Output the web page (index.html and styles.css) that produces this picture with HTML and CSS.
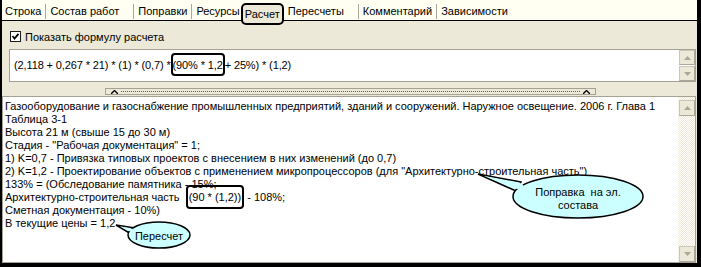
FILE: index.html
```html
<!DOCTYPE html>
<html lang="ru">
<head>
    <meta charset="UTF-8" />
    <title>Расчет</title>
    <link rel="stylesheet" href="styles.css">
</head>
<body>
<div class="window">

    <div class="tabs">
        <span class="tab first">Строка</span>
        <span class="tab wide">Состав работ</span>
        <span class="tab">Поправки</span>
        <span class="tab">Ресурсы</span>
        <span class="tab active">Расчет</span>
        <span class="tab after-active wide">Пересчеты</span>
        <span class="tab">Комментарий</span>
        <span class="tab">Зависимости</span>
    </div>

    <div class="page">
        <label class="opts">
            <svg class="check" width="11" height="11" viewBox="0 0 11 11">
                <rect x="0.5" y="0.5" width="10" height="10" fill="#fff" stroke="#1c1c1c"/>
                <path d="M2.5 5 L4.5 7.5 L8.5 2.8" fill="none" stroke="#000" stroke-width="1.8"/>
            </svg>
            Показать формулу расчета
        </label>

        <div class="formula">
            <div class="formula-text">(2,118 + 0,267 * 21) * (1) * (0,7) * <span class="mark">(90% * 1,2</span> + 25%) * (1,2)</div>
            <div class="scroll">
                <div class="sbtn"><svg width="7" height="4" viewBox="0 0 7 4"><path d="M0 4 L3.5 0 L7 4 Z" fill="#aca899"/></svg></div>
                <div class="sbtn"><svg width="7" height="4" viewBox="0 0 7 4"><path d="M0 0 L3.5 4 L7 0 Z" fill="#aca899"/></svg></div>
            </div>
        </div>

        <div class="split-row">
            <div class="splitter">
                <svg width="7" height="4" viewBox="0 0 7 4"><path d="M0 4 L3.5 0.5 L7 4" fill="none" stroke="#000" stroke-width="1.4"/></svg>
                <span class="dots"></span>
                <svg width="7" height="4" viewBox="0 0 7 4"><path d="M0 4 L3.5 0.5 L7 4" fill="none" stroke="#000" stroke-width="1.4"/></svg>
            </div>
        </div>

        <div class="memo">
            <div class="memo-text">
                <div>Газооборудование и газоснабжение промышленных предприятий, зданий и сооружений. Наружное освещение. 2006 г. Глава 1</div>
                <div>Таблица 3-1</div>
                <div>Высота 21 м (свыше 15 до 30 м)</div>
                <div>Стадия - "Рабочая документация" = 1;</div>
                <div>1) K=0,7 - Привязка типовых проектов с внесением в них изменений (до 0,7)</div>
                <div>2) K=1,2 - Проектирование объектов с применением микропроцессоров (для "Архитектурно-строительная часть")</div>
                <div>133% = (Обследование памятника - 15%;</div>
                <div>Архитектурно-строительная часть &nbsp;<span class="mark small">(90 * (1,2))</span> - 108%;</div>
                <div>Сметная документация - 10%)</div>
                <div>В текущие цены = 1,2</div>
            </div>
            <div class="scroll tall">
                <div class="sbtn"><svg width="7" height="4" viewBox="0 0 7 4"><path d="M0 4 L3.5 0 L7 4 Z" fill="#aca899"/></svg></div>
                <div class="track"></div>
                <div class="sbtn"><svg width="7" height="4" viewBox="0 0 7 4"><path d="M0 0 L3.5 4 L7 0 Z" fill="#aca899"/></svg></div>
            </div>
        </div>
    </div>

    <!-- callouts over the memo -->
    <svg class="callouts" width="701" height="267" viewBox="0 0 701 267">
        <g stroke="#000" stroke-width="1.5" fill="#ccffff">
            <path d="M521 182 L478 174 L516 191 Z"/>
            <ellipse cx="578" cy="196.5" rx="65" ry="21.5"/>
            <path d="M135 228 L116 225 L131 234 Z"/>
            <ellipse cx="159" cy="235" rx="31" ry="13"/>
        </g>
        <g fill="#ccffff">
            <path d="M522 183.5 L484 176 L517 189 L526 190 Z"/>
            <path d="M136 229.5 L120 226.5 L132 232.5 L138 232 Z"/>
        </g>
        <text class="bubble" x="578" y="196" text-anchor="middle">Поправка &nbsp;на эл.</text>
        <text class="bubble" x="578" y="209" text-anchor="middle">состава</text>
        <text class="bubble" x="159" y="240" text-anchor="middle">Пересчет</text>
    </svg>

</div>
</body>
</html>
```

FILE: styles.css
```css
* {
    box-sizing: border-box;
}

body {
    margin: 0;
    font-family: "Liberation Sans", Arial, sans-serif;
    font-size: 11px;
    color: #000;
}

.window {
    position: relative;
    width: 701px;
    height: 267px;
    border-left: 2px solid #000;
    border-right: 4px solid #000;
    border-bottom: 4px solid #000;
    background: #ece9d8;
    display: flex;
    flex-direction: column;
}

/* tab strip */
.tabs {
    height: 21px;
    flex: none;
    display: flex;
    align-items: center;
    padding-top: 2px;
    background: #fffff2;
    border-bottom: 1px solid #000;
}

.tab {
    height: 15px;
    line-height: 15px;
    padding: 0 4px;
    border-left: 1px solid #a8a8a0;
    white-space: nowrap;
}

.tab.first {
    border-left: none;
    padding-left: 3px;
}

.tab.wide {
    padding-right: 14px;
}

.tab.active {
    position: relative;
    z-index: 1;
    align-self: flex-start;
    margin-top: 1px;
    margin-left: -3px;
    height: 22px;
    line-height: 18px;
    padding: 0 2px;
    border: 2px solid #000;
    border-radius: 5px;
    background: #ece9d8;
}

.tab.after-active {
    border-left: none;
}

.page {
    flex: 1;
    display: flex;
    flex-direction: column;
}

.opts {
    height: 28px;
    flex: none;
    display: flex;
    align-items: center;
    gap: 4px;
    padding: 3px 0 0 8px;
}

.check {
    display: block;
}

/* formula box */
.formula {
    height: 33px;
    flex: none;
    margin: 0 1px 0 7px;
    display: flex;
    border: 1px solid #a5a293;
    background: #fff;
}

.formula-text {
    flex: 1;
    padding: 9px 4px 0;
    line-height: 13px;
    letter-spacing: -0.12px;
    white-space: nowrap;
}

.mark {
    border: 2px solid #000;
    border-radius: 4px;
    padding: 4px 0 3px 0;
    margin: 0 -3px 0 -3px;
}

.mark.small {
    padding: 4px 1px 4px 1px;
    margin: 0;
}

/* scroll bars */
.scroll {
    width: 17px;
    flex: none;
    display: flex;
    flex-direction: column;
    gap: 1px;
    padding: 0 0 0 1px;
}

.sbtn {
    height: 15px;
    display: flex;
    align-items: center;
    justify-content: center;
    background: #ece9d8;
    border: 1px solid #c9c6b6;
    border-right-color: #aca899;
    border-bottom-color: #aca899;
}

.scroll.tall {
    gap: 0;
    padding-top: 3px;
    background: repeating-conic-gradient(#fff 0 25%, #ece9d8 0 50%) 0 0 / 2px 2px;
}

.scroll.tall .sbtn {
    height: 16px;
}

.track {
    flex: 1;
}

/* splitter */
.split-row {
    height: 14px;
    flex: none;
    padding: 6px 0 0 103px;
}

.splitter {
    width: 491px;
    height: 7px;
    display: flex;
    align-items: center;
    gap: 3px;
    padding: 0 5px;
    border: 1px solid #a5a293;
    background: #ece9d8;
}

.splitter svg {
    display: block;
}

.dots {
    flex: 1;
    border-top: 1px dotted #3d5fc4;
}

/* main memo */
.memo {
    flex: 1;
    margin-right: 1px;
    display: flex;
    border: 1px solid #a5a293;
    background: #fff;
}

.memo-text {
    flex: 1;
    padding: 3px 2px 0;
    line-height: 13px;
    white-space: nowrap;
    overflow: hidden;
}

/* callouts */
.callouts {
    position: absolute;
    left: -2px;
    top: 0;
    pointer-events: none;
}

.bubble {
    font-family: "Liberation Sans", Arial, sans-serif;
    font-size: 11px;
    fill: #000;
}
```
